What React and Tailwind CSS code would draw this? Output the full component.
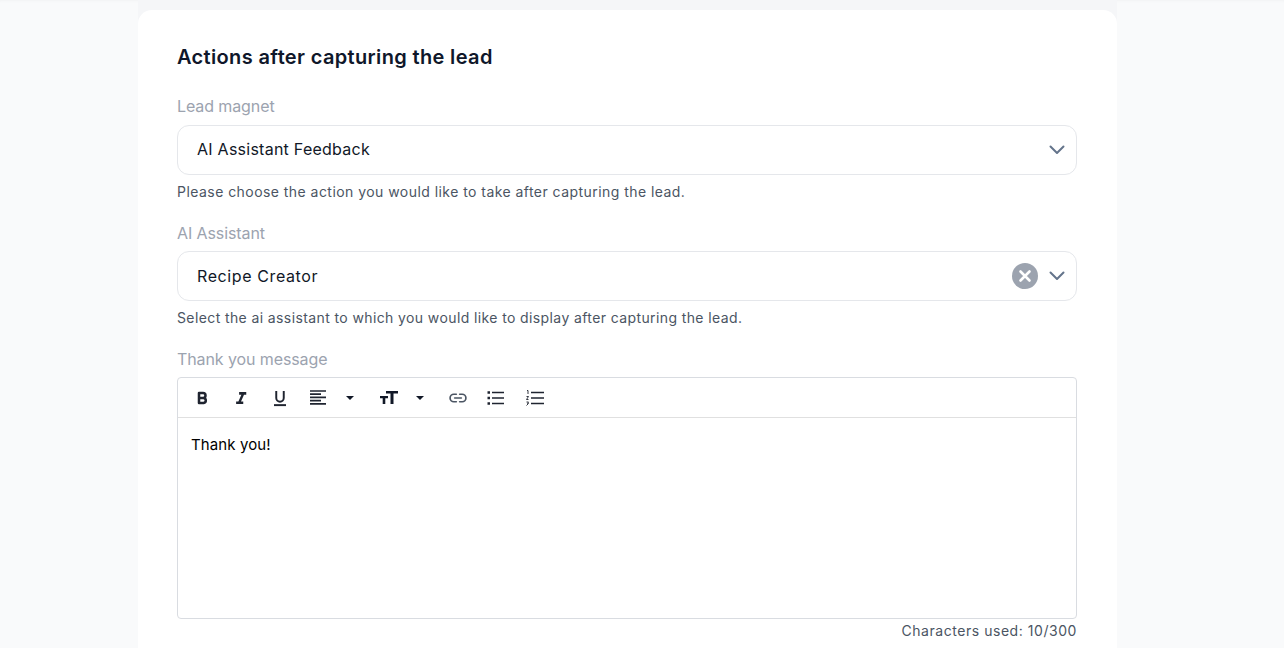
import React from 'react';

const Chevron = () => (
  <svg width="16" height="10" viewBox="0 0 16 10" fill="none" stroke="#64748b" strokeWidth="2" strokeLinecap="round" strokeLinejoin="round">
    <path d="M1.500 1.500 8 8l6.500-6.500" />
  </svg>
);

const Caret = () => (
  <svg width="10" height="6" viewBox="0 0 10 6" fill="#111827"><path d="M1 1h8L5 5z" /></svg>
);

const Bold = () => (
  <svg width="16" height="16" viewBox="0 0 24 24" fill="none" stroke="#1f2430" strokeWidth="3.800" strokeLinejoin="round">
    <path d="M7.500 4.500h6a3.700 3.700 0 0 1 0 7.500h-6zM7.500 12h7a3.800 3.800 0 0 1 0 7.500h-7z" />
  </svg>
);

const Italic = () => (
  <svg width="18" height="18" viewBox="0 0 24 24" fill="#1f2430"><path d="M9.500 4H19v3.500h-3l-4 9h3V20H5.500v-3.500h3l4-9h-3z" /></svg>
);

const Underline = () => (
  <svg width="18" height="18" viewBox="0 0 24 24" fill="none" stroke="#1f2430" strokeWidth="2.600">
    <path d="M7 2.500V12a5 5 0 0 0 10 0V2.500" />
    <path d="M4 21.500h16" />
  </svg>
);

const AlignLeft = () => (
  <svg width="18" height="18" viewBox="0 0 18 18" fill="none" stroke="#1f2430" strokeWidth="1.700">
    <path d="M1 2h16M1 5.200h11M1 8.400h16M1 11.600h11M1 14.800h16" />
  </svg>
);

const TextSize = () => (
  <svg width="20" height="18" viewBox="0 0 20 18" fill="#111827">
    <path d="M7 2h12v2.600h-4.500V15h-3V4.600H7z" />
    <path d="M1 7h8v2.200H6.300V15H3.700V9.200H1z" />
  </svg>
);

const LinkIcon = () => (
  <svg width="20" height="20" viewBox="0 0 24 24" fill="none" stroke="#4b5563" strokeWidth="2" strokeLinecap="round">
    <path d="M10 7.500H7a4.500 4.500 0 0 0 0 9h3M14 7.500h3a4.500 4.500 0 0 1 0 9h-3M8 12h8" />
  </svg>
);

const BulletList = () => (
  <svg width="18" height="18" viewBox="0 0 18 18" fill="none" stroke="#1f2430" strokeWidth="1.700">
    <path d="M5 3.500h12M5 9h12M5 14.500h12" />
    <path d="M.5 3.500h2.500M.5 9h2.500M.5 14.500h2.500" strokeWidth="2.400" />
  </svg>
);

const NumberList = () => (
  <svg width="18" height="18" viewBox="0 0 18 18" fill="none" stroke="#1f2430">
    <path d="M5 3.500h13M5 9h13M5 14.500h13" strokeWidth="1.700" />
    <path d="M1 1.500h1v3.500M.5 7.500h2L.5 10.500h2M.5 13h2l-1 1.500h1l-2 2" strokeWidth=".9" />
  </svg>
);

const Field = ({ label, value, help, clearable, first }) => (
  <div>
    <div className={first ? 'text-[16px] leading-[20px] tracking-[-0.1px] text-[#9ca3af] h-[29px]' : 'text-[16px] leading-[20px] tracking-[-0.1px] text-[#9ca3af] h-[28px]'}>{label}</div>
    <div className="h-[50px] border border-[#e5e7eb] rounded-[12px] flex items-center pl-[19px] pr-[11px] text-[16px] text-[#111827] bg-white">
      <span className={first ? 'flex-1 tracking-[0.25px] pb-[2px]' : 'flex-1 tracking-[0.6px]'}>{value}</span>
      {clearable && (
        <span className="w-[26px] h-[26px] rounded-full bg-[#9ca3af] flex items-center justify-center mr-[11px]">
          <svg width="14" height="14" viewBox="0 0 14 14" stroke="#fff" strokeWidth="2.600" strokeLinecap="round"><path d="M2.500 2.500l9 9M11.500 2.500l-9 9" /></svg>
        </span>
      )}
      <Chevron />
    </div>
    <p className={first ? 'text-[14px] leading-[20px] text-[#4b5563] mt-[7px] tracking-[0.45px]' : 'text-[14px] leading-[20px] text-[#4b5563] mt-[7px] tracking-[0.39px]'}>{help}</p>
  </div>
);

export default function App() {
  return (
    <div className="h-[648px] overflow-hidden bg-[#f9fafb] pl-[138px] shadow-[inset_0_3px_3px_-2px_rgba(0,0,0,0.03)]" style={{ fontFamily: 'Inter, sans-serif' }}>
      <div className="w-[979px] h-[648px] pt-[10px] bg-[#f5f6f8]">
        <div className="bg-white rounded-t-[14px] pl-[39px] pr-[40px] pt-[33px] h-[638px]">
          <h2 className="text-[20px] leading-[28px] font-semibold tracking-[0.35px] text-[#0f172a]">Actions after capturing the lead</h2>
          <div className="mt-[25px] flex flex-col gap-[21px]">
            <Field first label="Lead magnet" value="AI Assistant Feedback" help="Please choose the action you would like to take after capturing the lead." />
            <Field label="AI Assistant" value="Recipe Creator" clearable help="Select the ai assistant to which you would like to display after capturing the lead." />
            <div>
              <div className="text-[16px] leading-[20px] tracking-[-0.1px] text-[#9ca3af] h-[28px]">Thank you message</div>
              <div className="h-[242px] border border-[#d9dce1] rounded-[4px] flex flex-col">
                <div className="h-[40px] border-b border-[#e0e0e0] flex items-center pl-[16px] shrink-0">
                  <span className="w-[38px] flex items-center"><Bold /></span>
                  <span className="w-[39px] flex items-center"><Italic /></span>
                  <span className="w-[38px] flex items-center"><Underline /></span>
                  <span className="w-[36px] flex items-center"><AlignLeft /></span>
                  <span className="w-[34px] flex items-center"><Caret /></span>
                  <span className="w-[36px] flex items-center"><TextSize /></span>
                  <span className="w-[33px] flex items-center"><Caret /></span>
                  <span className="w-[39px] flex items-center"><LinkIcon /></span>
                  <span className="w-[39px] flex items-center"><BulletList /></span>
                  <span className="w-[38px] flex items-center"><NumberList /></span>
                </div>
                <div className="px-[13px] pt-[15px] text-[15px] leading-[24px] tracking-[0.1px] text-black">Thank you!</div>
              </div>
              <div className="text-right text-[14px] leading-[20px] tracking-[0.55px] text-[#4b5563] mt-[2px]">Characters used: 10/300</div>
            </div>
          </div>
        </div>
      </div>
    </div>
  );
}
